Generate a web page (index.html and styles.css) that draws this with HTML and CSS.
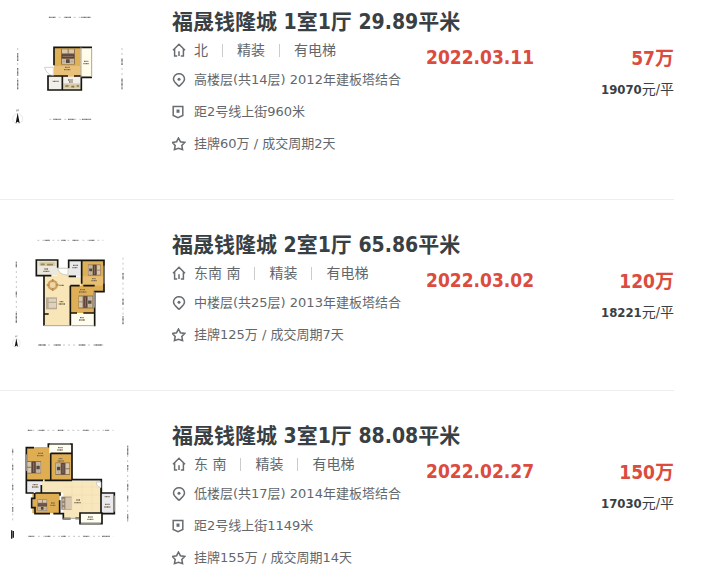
FILE: index.html
```
<!DOCTYPE html>
<html lang="zh-CN">
  <head>
    <meta charset="utf-8" />
    <title>福晟钱隆城 成交</title>
    <link rel="stylesheet" href="styles.css">
  </head>

  <body>
    <svg class="sprite" aria-hidden="true">
      <symbol id="house" viewBox="0 0 14 14">
        <path d="M1 7.2 7 1.2l6 6M2.6 6v7h2.6M11.4 6v7H8.8M7 8.2V13" />
      </symbol>
      <symbol id="pin" viewBox="0 0 14 14">
        <path d="M7 13.3C4.500 11 1.500 9 1.500 6.100a5.500 5.400 0 0 1 11 0C12.500 9 9.500 11 7 13.300Z" />
        <circle class="dot" cx="7" cy="6.200" r="1.500" />
      </symbol>
      <symbol id="metro" viewBox="0 0 14 14">
        <path d="M1.200 1.500h9.600v9L6 12.700 1.200 10.500Z" />
        <path class="dot" d="M4.500 4.500h3v3.300h-3Z" />
      </symbol>
      <symbol id="star" viewBox="0 0 14 14">
        <path d="m6.500 1 1.900 3.700 4.400.7-3 3 .8 4.300-4.100-1.500-4.100 1.500.8-4.300-3-3 4.400-.7Z" />
      </symbol>
      <symbol id="north" viewBox="0 0 36 50">
        <path d="M15 2v6l5-6v6" fill="none" stroke="#333" />
        <circle cx="18" cy="30" r="15" fill="none" stroke="#ddd" stroke-width="2" />
        <path d="m18 12 6 32-6-5-6 5Z" fill="#111" />
      </symbol>
      <symbol id="bed" viewBox="0 0 42 48">
        <path d="M0 0h42v48H0Z" fill="#8d7356" />
        <path d="M3 2h17v12H3ZM23 2h16v12H23Z" fill="#d5c7b0" />
        <path d="M2 17h38v12H2Z" fill="#5b4239" />
        <path d="M3 31h36v15H3Z" fill="#c9bca6" />
        <path d="M15 32h11v11H15Z" fill="#554840" />
        <path d="M5 23h32M6 38h6M29 38h8" stroke="#a6957f" stroke-width="2" />
      </symbol>
    </svg>

    <ul class="deal-list">
      <li class="deal">
        <svg class="plan" viewBox="0 24 420 360" role="img" aria-label="1室1厅户型图">
          <g class="scale">
            <path d="M146 52h130M148 358h126M53 144v126M366 144v126" />
            <path class="num" d="M147 52h20M194 52h20M244 52h28M160 358h22M204 358h20M246 358h26M53 160v24M53 204v24M53 240v28M366 176v20M366 236v30" />
          </g>
          <path d="M162 142h80v88h-80Z" fill="#e0b057" />
          <path d="M162 198h80v32h-80Z" fill="#e8c078" />
          <path d="M243 145h32v88h-32Z" fill="#fffdea" />
          <path d="M145 230h98v40h-98Z" fill="#f1efec" />
          <path d="M190 250h52v16h-52Z" fill="#d8cba9" />
          <path d="M276 142H162v54M243 232h33M162 228h-18v42h100v-40M187 230v40M162 228h42M222 228h22" class="wall" />
          <path d="M275 145v86M243 142v90" class="window" />
          <path d="M134 202h26v24c-14 0-22-10-26-24Z" class="door" />
          <use href="#bed" x="183" y="146" width="42" height="48" />
          <path class="label" d="M195 202h14M192 209h20M252 184h13M250 191h17M158 244h18M204 240h14M207 246h12" />
          <path d="M196 258h10M214 260h9M230 258h7" stroke="#8b7750" stroke-width="5" />
          <use href="#north" x="35" y="326" width="36" height="50" />
        </svg>
        <h2 class="title"><a href="#">福晟钱隆城 1室1厅 29.89平米</a></h2>
        <div class="details">
          <div class="base"><svg class="icon"><use href="#house" /></svg><span>北</span><i></i><span>精装</span><i></i><span>有电梯</span></div>
          <div><svg class="icon"><use href="#pin" /></svg>高楼层(共14层) 2012年建板塔结合</div>
          <div><svg class="icon"><use href="#metro" /></svg>距2号线上街960米</div>
          <div><svg class="icon"><use href="#star" /></svg>挂牌60万 / 成交周期2天</div>
        </div>
        <div class="date">2022.03.11</div>
        <div class="price">
          <div class="total">57万</div>
          <div class="unit"><b>19070</b>元/平</div>
        </div>
      </li>

      <li class="deal">
        <svg class="plan" viewBox="0 18 420 360" role="img" aria-label="2室1厅户型图">
          <g class="scale">
            <path d="M112 46h198M114 360h196M49 108v192M369 98v202" />
            <path class="num" d="M134 46h16M184 46h14M218 46h16M268 46h16M116 360h22M164 360h18M238 360h18M284 360h24M49 112v14M49 200v14M49 264v30M369 144v20M369 222v18M369 274v24" />
          </g>
          <path d="M130 152h80v150h-80ZM172 128h34v40h-34ZM200 156h46v26h-46Z" fill="#f8e6b9" />
          <path d="M109 106h64v45h-64Z" fill="#ebe8df" />
          <path d="M118 110h48v13h-48Z" fill="#d8cca7" />
          <path d="M207 106h38v48h-38Z" fill="#e9e9ec" />
          <path d="M245 106h67v94h-67ZM211 182h73v82h-73Z" fill="#dfaf55" />
          <path d="M245 154h66v28h-66Z" fill="#e8bf70" />
          <path d="M211 264h73v38h-73Z" fill="#fffdef" />
          <path class="wall" d="M132 152h-23v-47h64v23M132 152v150M132 152h22M206 130v-24h39v50M206 154h22M245 106h67v94h-28v104M245 156v20M211 182v120M211 182h28M250 182h34M211 264h20M250 264h34M132 267h14" />
          <path class="window" d="M132 302h79M215 302h68M312 122v54M284 200v48" />
          <path class="door" d="M173 130h31v20c-18 0-27-7-31-20Z" />
          <circle cx="158" cy="180" r="16" fill="#d0a05f" />
          <path d="M158 162v36M140 180h36" stroke="#b58a55" stroke-width="5" />
          <circle cx="158" cy="180" r="9" fill="#f0d6a2" />
          <path d="M138 217h33v36h-33Z" fill="#b9aa95" />
          <path d="M146 221h22v9h-22ZM146 234h22v14h-22Z" fill="#ded2bd" />
          <use href="#bed" x="236" y="209" width="42" height="44" transform="rotate(-90 257 231)" />
          <use href="#bed" x="266" y="115" width="34" height="40" transform="rotate(90 283 135)" />
          <path class="label" d="M133 132h11M130 139h18M219 121h15M217 128h16M276 161h12M274 167h17M178 181h14M179 230h12M176 237h20M240 194h16M237 201h22M240 278h12M237 285h18" />
          <path d="M122 118h12M141 119h18" stroke="#9b875b" stroke-width="5" />
          <use href="#north" x="34" y="330" width="30" height="40" />
        </svg>
        <h2 class="title"><a href="#">福晟钱隆城 2室1厅 65.86平米</a></h2>
        <div class="details">
          <div class="base"><svg class="icon"><use href="#house" /></svg><span>东南 南</span><i></i><span>精装</span><i></i><span>有电梯</span></div>
          <div><svg class="icon"><use href="#pin" /></svg>中楼层(共25层) 2013年建板塔结合</div>
          <div><svg class="icon"><use href="#star" /></svg>挂牌125万 / 成交周期7天</div>
        </div>
        <div class="date">2022.03.02</div>
        <div class="price">
          <div class="total">120万</div>
          <div class="unit"><b>18221</b>元/平</div>
        </div>
      </li>

      <li class="deal">
        <svg class="plan" viewBox="0 21 420 360" role="img" aria-label="3室1厅户型图">
          <g class="scale">
            <path d="M82 46h258M84 364h256M38 100v222M383 90v234" />
            <path class="num" d="M84 46h12M118 46h15M174 46h15M250 46h16M316 46h10M86 364h16M136 364h16M184 364h14M250 364h16M306 364h24M38 104v10M38 150v14M38 210v14M38 276v14M383 94v26M383 150v14M383 206v18M383 242v14M383 298v18" />
          </g>
          <path d="M79 98h70v98H79ZM152 116h64v80h-64ZM97 233h82v62H97Z" fill="#dfae53" />
          <path d="M124 197h178v96h-56v16h-56v-76h-66Z" fill="#f8e6bd" />
          <path d="M79 197h46v36H79ZM304 236h39v60h-39Z" fill="#e9e9ee" />
          <path d="M148 87h68v28h-68ZM240 294h64v32h-64Z" fill="#fffef2" />
          <path class="wall" d="M102 98H79v98h50M145 98v-11h71v107h88v40h39v62h-36M152 115v80M152 115h64M134 196h82M79 198v36h22M124 210v22M106 234h74v8M104 234v16h-9v28h10v18h45M160 296h30v15h22M179 256v40M303 220v76M240 294h66v32h-66ZM226 310h16" />
          <path class="window" d="M103 98h42M150 87h60M79 118v50M343 242v48M242 326h60M190 310h48" />
          <path class="door" d="M289 201h14v17c-9-1-14-7-14-17Z" />
          <use href="#bed" x="83" y="135" width="38" height="44" transform="rotate(-90 102 157)" />
          <use href="#bed" x="169" y="138" width="38" height="46" transform="rotate(90 188 161)" />
          <use href="#bed" x="112" y="248" width="30" height="45" />
          <path d="M184 245h31v39h-31Z" fill="#8f7d6d" />
          <path d="M196 247h20v36h-20Z" fill="#d8c7ae" />
          <path d="M187 251h6v8h-6ZM187 263h6v8h-6ZM187 275h6v7h-6Z" fill="#c7b6a1" />
          <path d="M216 200v88M246 200v90M276 200v92M190 216h110M190 240h110M220 266h80" fill="none" stroke="#edd5a3" />
          <path class="label" d="M114 115h15M111 122h20M176 131h12M173 138h18M174 98h14M172 105h17M98 209h16M96 216h20M153 264h12M151 271h16M229 255h12M223 263h20M314 245h15M315 268h14M313 276h18M264 306h14M262 313h18" />
          <path d="M35 346v25M40 348v20" stroke="#222" stroke-width="4" />
        </svg>
        <h2 class="title"><a href="#">福晟钱隆城 3室1厅 88.08平米</a></h2>
        <div class="details">
          <div class="base"><svg class="icon"><use href="#house" /></svg><span>东 南</span><i></i><span>精装</span><i></i><span>有电梯</span></div>
          <div><svg class="icon"><use href="#pin" /></svg>低楼层(共17层) 2014年建板塔结合</div>
          <div><svg class="icon"><use href="#metro" /></svg>距2号线上街1149米</div>
          <div><svg class="icon"><use href="#star" /></svg>挂牌155万 / 成交周期14天</div>
        </div>
        <div class="date">2022.02.27</div>
        <div class="price">
          <div class="total">150万</div>
          <div class="unit"><b>17030</b>元/平</div>
        </div>
      </li>
    </ul>
  </body>
</html>
```

FILE: styles.css
```
* {
  box-sizing: border-box;
  margin: 0;
  padding: 0;
}

body {
  background: #fff;
  color: #394043;
  font-family: "DejaVu Sans Condensed", "Noto Sans CJK SC", sans-serif;
  font-size: 14px;
}

.sprite {
  display: none;
}

.deal-list {
  margin-right: 44px;
  list-style: none;
}

.deal {
  display: grid;
  grid-template-columns: 172px 254px 1fr auto;
  grid-template-rows: 28px auto;
  padding: 31px 0 39px;
  border-bottom: 1px solid #eee;
}

.deal:first-child {
  padding-top: 8px;
}

.deal:last-child {
  border-bottom: none;
}

.plan {
  grid-row: 1 / 3;
  width: 140px;
  height: 120px;
}

.title {
  grid-column: 2 / 5;
  font-size: 21px;
  line-height: 28px;
}

.title a {
  color: inherit;
  text-decoration: none;
}

.details {
  color: #62676c;
  font-family: "DejaVu Sans", "Noto Sans CJK SC", sans-serif;
  font-size: 13px;
  line-height: 32px;
  white-space: nowrap;
}

.details div {
  display: flex;
  align-items: center;
}

.details .base {
  font-size: 14px;
  line-height: 28px;
}

.base i {
  width: 1px;
  height: 13px;
  margin: 0 14px;
  background: #ccc;
}

.icon {
  width: 14px;
  height: 14px;
  margin-right: 8px;
  fill: none;
  stroke: #686d72;
  stroke-width: 1.5;
}

.dot {
  fill: #686d72;
  stroke: none;
}

.date {
  padding-top: 7px;
  color: #db4c3f;
  font-size: 19px;
  font-weight: bold;
  line-height: 28px;
}

.price {
  padding-top: 7px;
  text-align: right;
}

.total {
  color: #db4c3f;
  font-size: 19px;
  font-weight: bold;
  line-height: 30px;
}

.unit {
  line-height: 32px;
}

.unit b {
  font-size: 13px;
}

/* floor plans */
.scale path {
  fill: none;
  stroke: #aaa;
  stroke-width: 2;
  stroke-dasharray: 6 9;
}

.scale .num {
  stroke: #777;
  stroke-width: 4;
  stroke-dasharray: 3 1;
}

.wall {
  fill: none;
  stroke: #17150f;
  stroke-width: 5;
}

.window {
  fill: none;
  stroke: #aaa79d;
  stroke-width: 3;
}

.door {
  fill: #fff;
  stroke: #bbb;
  stroke-width: 2;
}

.label {
  fill: none;
  stroke: #7b6b55;
  stroke-width: 4;
  stroke-dasharray: 3 1;
}
```
